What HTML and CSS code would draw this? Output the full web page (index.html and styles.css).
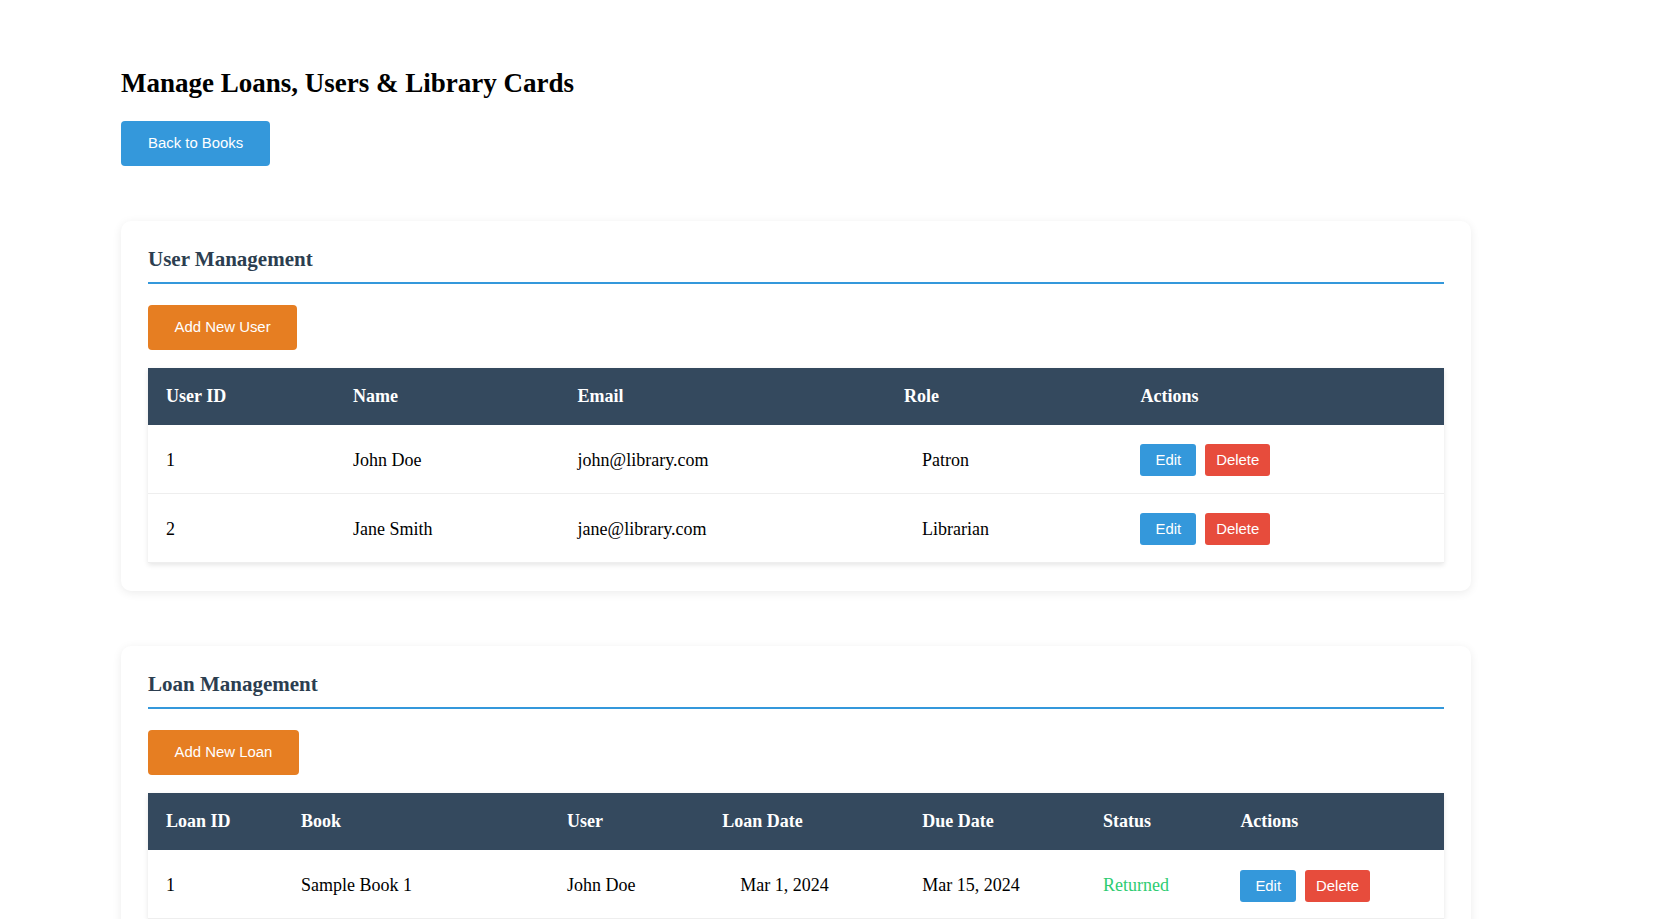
FILE: index.html
```html
<!DOCTYPE html>
<html lang="en">
<head>
<meta charset="utf-8">
<title>Manage Loans, Users &amp; Library Cards</title>
<link rel="stylesheet" href="styles.css">
</head>
<body>
<div class="page">
  <h1 class="page-title">Manage Loans, Users &amp; Library Cards</h1>
  <button class="btn btn-back">Back to Books</button>

  <section class="card">
    <h2 class="card-title">User Management</h2>
    <button class="btn btn-add">Add New User</button>
    <table class="data-table">
      <colgroup>
        <col class="u-c1"><col class="u-c2"><col class="u-c3"><col class="u-c4"><col class="u-c5">
      </colgroup>
      <thead>
        <tr><th>User ID</th><th>Name</th><th>Email</th><th>Role</th><th>Actions</th></tr>
      </thead>
      <tbody>
        <tr>
          <td>1</td><td>John Doe</td><td>john@library.com</td><td class="shift">Patron</td>
          <td class="actions"><button class="btn btn-sm btn-edit">Edit</button><button class="btn btn-sm btn-delete">Delete</button></td>
        </tr>
        <tr>
          <td>2</td><td>Jane Smith</td><td>jane@library.com</td><td class="shift">Librarian</td>
          <td class="actions"><button class="btn btn-sm btn-edit">Edit</button><button class="btn btn-sm btn-delete">Delete</button></td>
        </tr>
      </tbody>
    </table>
  </section>

  <section class="card">
    <h2 class="card-title">Loan Management</h2>
    <button class="btn btn-add">Add New Loan</button>
    <table class="data-table">
      <colgroup>
        <col class="l-c1"><col class="l-c2"><col class="l-c3"><col class="l-c4"><col class="l-c5"><col class="l-c6"><col class="l-c7">
      </colgroup>
      <thead>
        <tr><th>Loan ID</th><th>Book</th><th>User</th><th>Loan Date</th><th>Due Date</th><th>Status</th><th>Actions</th></tr>
      </thead>
      <tbody>
        <tr>
          <td>1</td><td>Sample Book 1</td><td>John Doe</td><td class="shift">Mar 1, 2024</td><td>Mar 15, 2024</td>
          <td class="status-returned">Returned</td>
          <td class="actions"><button class="btn btn-sm btn-edit">Edit</button><button class="btn btn-sm btn-delete">Delete</button></td>
        </tr>
      </tbody>
    </table>
  </section>
</div>
</body>
</html>
```

FILE: styles.css
```css
html {
  scrollbar-width: none;
}
html::-webkit-scrollbar {
  display: none;
}
body {
  margin: 0;
  background: #ffffff;
  font-family: "Liberation Serif", "Times New Roman", serif;
  color: #000;
}
.page {
  width: 1350px;
  padding: 67.6px 0 40px 121px;
}
.page-title {
  margin: 0 0 23.4px;
  font-size: 27px;
  line-height: 30px;
  font-weight: bold;
  color: #000;
}
.btn {
  display: inline-block;
  border: none;
  border-radius: 4px;
  color: #fff;
  font-family: "Liberation Sans", Arial, sans-serif;
  font-size: 14.9px;
  cursor: pointer;
  margin: 0;
}
.btn-back {
  background: #3498db;
  padding: 14px 27px;
  line-height: 17.5px;
  margin-bottom: 54.5px;
}
.card {
  box-sizing: border-box;
  width: 1350px;
  background: #fff;
  border-radius: 10px;
  box-shadow: 0 2px 10px rgba(0, 0, 0, 0.08);
  padding: 27px 27px 28px;
  margin-bottom: 55.5px;
}
.card-title {
  margin: 0 0 21.3px;
  padding-bottom: 10.7px;
  border-bottom: 2px solid #3498db;
  font-size: 21px;
  line-height: 23px;
  font-weight: bold;
  color: #2c3e50;
}
.btn-add {
  background: #e67e22;
  padding: 13px 26.6px;
  line-height: 18.6px;
  margin-bottom: 18.2px;
}
.data-table {
  width: 1296px;
  border-collapse: collapse;
  table-layout: fixed;
  background: #fff;
  box-shadow: 0 2px 5px rgba(0, 0, 0, 0.1);
  font-size: 18px;
}
.data-table th {
  background: #34495e;
  color: #fff;
  text-align: left;
  font-weight: bold;
  padding: 18px 18px;
  line-height: 21px;
}
.data-table td {
  padding: 19.5px 18px 16.5px;
  line-height: 21px;
  border-bottom: 1px solid #eeeeee;
  vertical-align: middle;
  color: #000;
}
.data-table td.shift {
  padding-left: 36px;
}
.data-table td.actions {
  font-size: 0;
  white-space: nowrap;
}
.btn-sm {
  height: 32px;
  line-height: 32px;
  border-radius: 3px;
  vertical-align: middle;
}
.btn-edit {
  background: #3498db;
  padding: 0 15px;
  margin-right: 9px;
}
.btn-delete {
  background: #e74c3c;
  padding: 0 11px;
}
.status-returned {
  color: #2ecc71 !important;
}
.u-c1 { width: 187px; }
.u-c2 { width: 224.6px; }
.u-c3 { width: 326.4px; }
.u-c4 { width: 236.5px; }
.u-c5 { width: 321.5px; }
.l-c1 { width: 135px; }
.l-c2 { width: 266px; }
.l-c3 { width: 155.3px; }
.l-c4 { width: 200px; }
.l-c5 { width: 180.7px; }
.l-c6 { width: 137.4px; }
.l-c7 { width: 221.6px; }
```
